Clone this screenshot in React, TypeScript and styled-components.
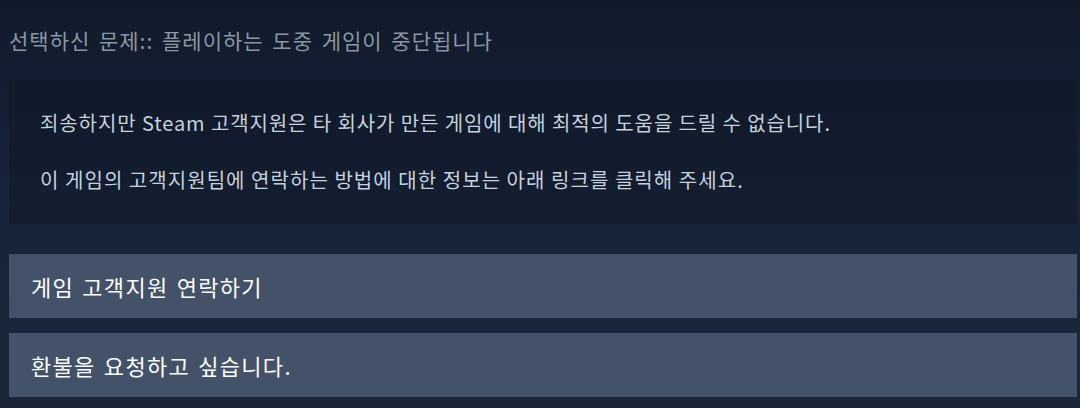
import React from "react";
import styled, { createGlobalStyle } from "styled-components";

const Global = createGlobalStyle`
  html, body { margin: 0; padding: 0; }
  body {
    width: 1080px;
    height: 408px;
    overflow: hidden;
    background: linear-gradient(180deg, #101a2b 0%, #17233a 45%, #1b2739 100%);
    font-family: "Noto Sans CJK KR", "Noto Sans", sans-serif;
  }
`;

const Page = styled.div`
  display: flex;
  flex-direction: column;
  padding: 0 3px 0 9px;
`;

const Title = styled.h2`
  margin: 0;
  padding: 26px 0 0 0;
  height: 52px;
  box-sizing: border-box;
  font-size: 21px;
  font-weight: 400;
  letter-spacing: 1px;
  word-spacing: 3px;
  color: #8c96a1;
  line-height: 28px;
  white-space: nowrap;
`;

const Notice = styled.div`
  margin-top: 28px;
  background: rgba(8, 12, 18, 0.25);
  padding: 30px 31px 0 31px;
  height: 144px;
  box-sizing: border-box;
  display: flex;
  flex-direction: column;
  gap: 31px;
`;

const NoticeLine = styled.p<{ $wide?: boolean }>`
  margin: 0;
  font-size: 20px;
  letter-spacing: ${(p) => (p.$wide ? "1.05px" : "0.9px")};
  line-height: 26px;
  color: #c6d1dc;
  white-space: nowrap;
`;

const Options = styled.div`
  margin-top: 30px;
  display: flex;
  flex-direction: column;
  gap: 15px;
`;

const OptionButton = styled.div`
  height: 64px;
  background: #435268;
  display: flex;
  align-items: center;
  padding-left: 22px;
  font-size: 22px;
  letter-spacing: 1.3px;
  word-spacing: 2px;
  color: #ffffff;
  white-space: nowrap;
`;

export default function App() {
  return (
    <>
      <Global />
      <Page>
        <Title>선택하신 문제:: 플레이하는 도중 게임이 중단됩니다</Title>
        <Notice>
          <NoticeLine>
            죄송하지만 Steam 고객지원은 타 회사가 만든 게임에 대해 최적의 도움을 드릴 수 없습니다.
          </NoticeLine>
          <NoticeLine $wide>
            이 게임의 고객지원팀에 연락하는 방법에 대한 정보는 아래 링크를 클릭해 주세요.
          </NoticeLine>
        </Notice>
        <Options>
          <OptionButton>게임 고객지원 연락하기</OptionButton>
          <OptionButton>환불을 요청하고 싶습니다.</OptionButton>
        </Options>
      </Page>
    </>
  );
}
